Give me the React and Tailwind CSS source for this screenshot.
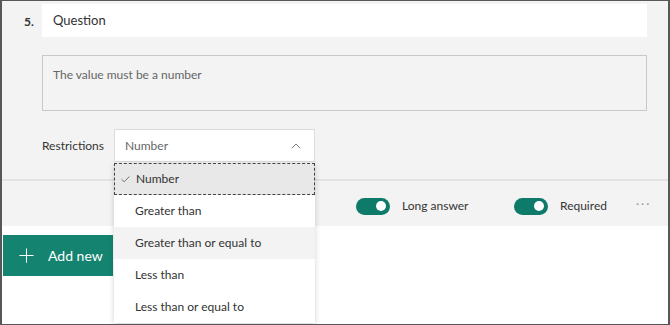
import { Check, ChevronUp, Plus } from "lucide-react";

const options = [
  "Number",
  "Greater than",
  "Greater than or equal to",
  "Less than",
  "Less than or equal to",
];

function Toggle() {
  return (
    <span className="flex items-center justify-end w-[34px] h-[17px] rounded-full bg-[#0e7a6a] px-[4px]">
      <span className="w-[10px] h-[10px] rounded-full bg-white" />
    </span>
  );
}

export default function App() {
  return (
    <div
      className="w-[670px] h-[325px] overflow-hidden border-x-2 border-y border-[#575757] bg-white text-[#333]"
      style={{ fontFamily: "Lato, 'Noto Sans', sans-serif" }}
    >
      {/* Question card */}
      <div className="bg-[#f3f3f3] h-[225px] flex flex-col">
        <div className="flex pl-[22px] pr-[21px] pt-[3px]">
          <span className="w-[18px] pt-[9px] text-[12px] font-bold">5.</span>
          <div className="flex-1 h-[33px] bg-white flex items-center px-[11px] text-[13px]">
            Question
          </div>
        </div>

        <div className="ml-[40px] mr-[21px] mt-[18px] h-[56px] border border-[#c8c8c8] px-[10px] pt-[10px] text-[12px] text-[#666]">
          The value must be a number
        </div>

        <div className="flex items-center mt-[18px] h-[33px] text-[12px]">
          <span className="w-[102px] text-right">Restrictions</span>
          <div className="relative ml-[10px] w-[201px] h-[33px]">
            <div className="h-full bg-white border border-[#dcdcdc] flex items-center justify-between pl-[10px] pr-[10px] text-[#666]">
              Number
              <ChevronUp size={16} strokeWidth={1.1} className="text-[#444]" />
            </div>
            <ul className="absolute left-0 top-[34px] w-[201px] bg-white shadow-[0_2px_6px_rgba(0,0,0,0.18)] z-10 text-[#333]">
              {options.map((o, i) => (
                <li
                  key={o}
                  className={
                    "relative h-[32px] flex items-center pl-[21px] " +
                    (i === 0
                      ? "bg-[#e8e8e8] border border-dashed border-[#444] pl-[20px]"
                      : i === 2
                      ? "bg-[#f3f3f3]"
                      : "")
                  }
                >
                  {i === 0 && (
                    <Check size={11} strokeWidth={1.4} className="absolute left-[5px] top-[10px] text-[#333]" />
                  )}
                  {o}
                </li>
              ))}
            </ul>
          </div>
        </div>

        <div className="mt-[17px] h-[2px] bg-[#e3e3e3]" />

        <div className="flex items-center flex-1 pl-[354px] pt-[5px] text-[12px]">
          <div className="w-[158px] flex items-center gap-[12px]">
            <Toggle />
            <span>Long answer</span>
          </div>
          <div className="w-[122px] flex items-center gap-[12px]">
            <Toggle />
            <span>Required</span>
          </div>
          <span className="text-[#999] tracking-[2px] text-[12px] -mt-[4px]">···</span>
        </div>
      </div>

      {/* Add new */}
      <button className="ml-[1px] mt-[9px] w-[110px] h-[41px] bg-[#148471] text-white flex items-center pl-[12px] gap-[10px] text-[14px]">
        <Plus size={23} strokeWidth={1.1} />
        Add new
      </button>
    </div>
  );
}
